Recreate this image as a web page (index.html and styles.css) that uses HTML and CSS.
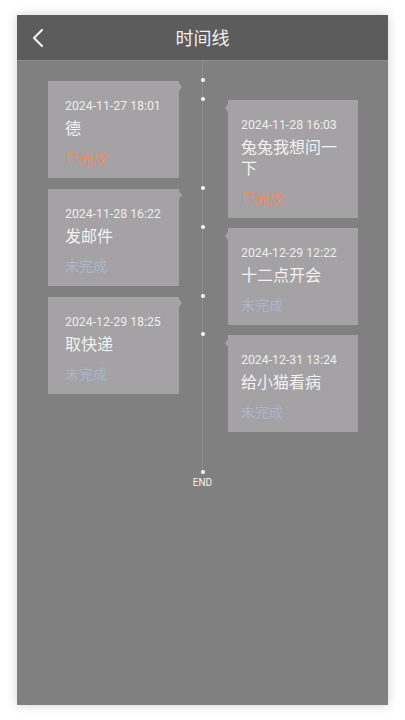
FILE: index.html
```html
<!DOCTYPE html>
<html lang="zh-CN">
	<head>
		<meta charset="UTF-8" />
		<meta name="viewport" content="width=device-width, initial-scale=1.0" />
		<title>时间线</title>
		<link rel="stylesheet" href="styles.css">
	</head>
	<body>
		<div class="screen">
			<div class="header">
				<svg class="back" viewBox="0 0 12 20">
					<path d="M10 2 L2 10 L10 18" />
				</svg>
				<span class="title">时间线</span>
			</div>
			<div class="timeline">
				<div class="cols">
					<div class="col col-left">
						<div class="card">
							<div class="date">2024-11-27 18:01</div>
							<div class="name">德</div>
							<div class="state done">已完成</div>
						</div>
						<div class="card">
							<div class="date">2024-11-28 16:22</div>
							<div class="name">发邮件</div>
							<div class="state">未完成</div>
						</div>
						<div class="card">
							<div class="date">2024-12-29 18:25</div>
							<div class="name">取快递</div>
							<div class="state">未完成</div>
						</div>
					</div>
					<div class="axis"></div>
					<div class="col col-right">
						<div class="card">
							<div class="date">2024-11-28 16:03</div>
							<div class="name">兔兔我想问一下</div>
							<div class="state done">已完成</div>
						</div>
						<div class="card">
							<div class="date">2024-12-29 12:22</div>
							<div class="name">十二点开会</div>
							<div class="state">未完成</div>
						</div>
						<div class="card">
							<div class="date">2024-12-31 13:24</div>
							<div class="name">给小猫看病</div>
							<div class="state">未完成</div>
						</div>
					</div>
				</div>
				<div class="end-dot"></div>
				<div class="end">END</div>
			</div>
		</div>
	</body>
</html>
```

FILE: styles.css
```css
html,
body {
	margin: 0;
	background: #fff;
}
body {
	padding: 15px 17px;
	font-family: Roboto, "Noto Sans CJK SC", sans-serif;
}
.screen {
	width: 371px;
	height: 690px;
	background: #808080;
	box-shadow: 0 0 10px rgba(0, 0, 0, 0.18);
	overflow: hidden;
}
.header {
	height: 45px;
	background: #5c5c5c;
	border-bottom: 1px solid #8e8e8e;
	display: flex;
	align-items: center;
	justify-content: center;
	position: relative;
}
.back {
	position: absolute;
	left: 15px;
	top: 13px;
	width: 12px;
	height: 20px;
	fill: none;
	stroke: #f2f2f2;
	stroke-width: 2.2;
	stroke-linecap: round;
	stroke-linejoin: round;
}
.title {
	color: #efefef;
	font-size: 18px;
	margin-top: -2px;
}
.timeline {
	display: flex;
	flex-direction: column;
	align-items: center;
	padding-bottom: 4px;
	background: linear-gradient(#8d8d8d, #8d8d8d) 185px 0 / 1px calc(100% - 21px) no-repeat;
}
.cols {
	display: flex;
	width: 100%;
	padding: 0 30px 0 31px;
	box-sizing: border-box;
}
.col {
	display: flex;
	flex-direction: column;
	gap: 11px;
}
.col-left {
	width: 131px;
	padding-top: 20px;
}
.col-right {
	width: 130px;
	padding-top: 39px;
	gap: 10px;
}
.axis {
	width: 49px;
}
.card {
	position: relative;
	background: #a4a2a4;
	padding: 17px 17px 10px;
}
.col-right .card {
	padding-left: 13px;
	padding-right: 19px;
}
.card::before {
	content: "";
	position: absolute;
	top: -3px;
	width: 4px;
	height: 4px;
	border-radius: 50%;
	background: #fafafa;
}
.card::after {
	content: "";
	position: absolute;
	border-top: 4px solid transparent;
	border-bottom: 4px solid transparent;
}
.col-left .card::before {
	right: -26px;
}
.col-left .card::after {
	right: -3px;
	top: 2px;
	border-left: 3px solid #a4a2a4;
}
.col-right .card::before {
	left: -27px;
}
.col-right .card::after {
	left: -3px;
	top: 4px;
	border-right: 3px solid #a4a2a4;
}
.date {
	color: #eeeeee;
	font-size: 12.3px;
	line-height: 16px;
}
.name {
	margin-top: 4px;
	color: #f3f3f3;
	font-size: 16px;
	line-height: 21px;
}
.state {
	margin-top: 9px;
	color: #aab6c9;
	font-size: 14px;
	line-height: 20px;
}
.state.done {
	color: #e0906f;
}
.end-dot {
	margin-top: 38px;
	width: 4px;
	height: 4px;
	border-radius: 50%;
	background: #fafafa;
}
.end {
	margin-top: 3px;
	color: #f0f0f0;
	font-size: 10px;
	line-height: 12px;
}
```
